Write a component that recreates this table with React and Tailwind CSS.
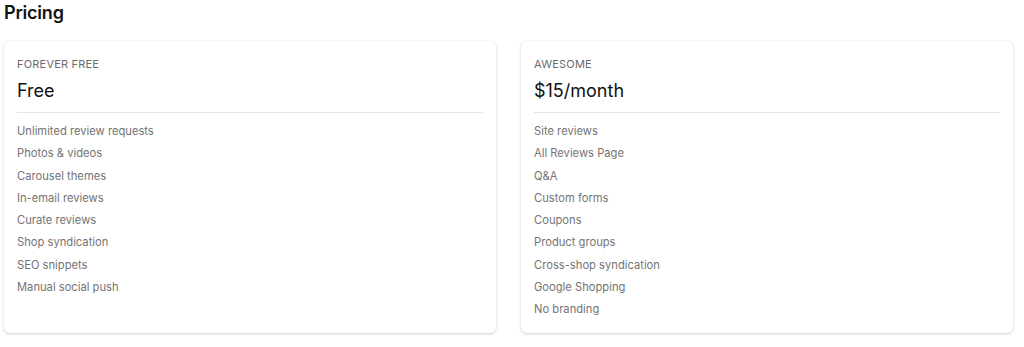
import React from "react";

const plans = [
  {
    label: "FOREVER FREE",
    price: "Free",
    features: [
      "Unlimited review requests",
      "Photos & videos",
      "Carousel themes",
      "In-email reviews",
      "Curate reviews",
      "Shop syndication",
      "SEO snippets",
      "Manual social push",
    ],
  },
  {
    label: "AWESOME",
    price: "$15/month",
    features: [
      "Site reviews",
      "All Reviews Page",
      "Q&A",
      "Custom forms",
      "Coupons",
      "Product groups",
      "Cross-shop syndication",
      "Google Shopping",
      "No branding",
    ],
  },
];

export default function App() {
  return (
    <div
      className="w-[1024px] h-[347px] bg-white pl-[4px] pr-[11px] overflow-hidden"
      style={{ fontFamily: "Inter, 'Noto Sans', sans-serif" }}
    >
      <h2 className="text-[18px] leading-[26px] font-semibold text-[#111] tracking-[-0.2px]">Pricing</h2>
      <div className="grid grid-cols-2 gap-[25px] mt-[15px]">
        {plans.map((p) => (
          <div
            key={p.label}
            className="rounded-[6px] bg-white px-[13px] pt-[13px] pb-[12px] shadow-[0_1px_3px_rgba(0,0,0,0.18),0_0_1px_rgba(0,0,0,0.08)]"
          >
            <div className="text-[11px] leading-[20px] text-[#6b6b6b] tracking-[0.2px]">{p.label}</div>
            <div className="mt-[3px] text-[18px] leading-[28px] text-[#111]">{p.price}</div>
            <div className="mt-[7px] h-px bg-[#e5e5e5]" />
            <ul className="mt-[7px]">
              {p.features.map((f) => (
                <li key={f} className="h-[22.3px] leading-[22.3px] text-[11.2px] text-[#747474]">
                  {f}
                </li>
              ))}
            </ul>
          </div>
        ))}
      </div>
    </div>
  );
}
